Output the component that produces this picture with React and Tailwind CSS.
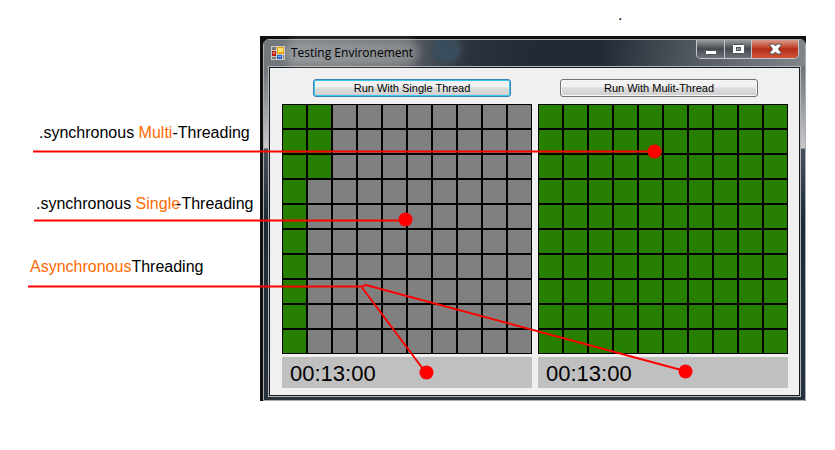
const SINGLE_DONE = new Set([0, 1, 10, 11, 20, 21, 30, 40, 50, 60, 70, 80, 90]);

function ThreadPanel({ label, focused, isDone }) {
  return (
    <section className="flex min-w-0 flex-1 flex-col">
      <div className={focused ? "flex justify-center pl-[10px]" : "flex justify-center pr-2"}>
        <button
          type="button"
          className={
            focused
              ? "h-[18px] w-[198px] rounded-[3px] border border-[#3c7fb1] bg-linear-to-b from-[#f2f2f2] from-40% via-[#dddddd] via-50% to-[#cfcfcf] text-[11px] leading-4 text-black inset-ring inset-ring-[#38c5ee]"
              : "h-[18px] w-[198px] rounded-[3px] border border-[#707070] bg-linear-to-b from-[#f2f2f2] from-40% via-[#dddddd] via-50% to-[#cfcfcf] text-[11px] leading-4 text-black inset-ring inset-ring-[#f8f8f8]"
          }
        >
          {label}
        </button>
      </div>
      <div className="mt-[7px] grid grid-cols-10">
        {Array.from({ length: 100 }, (_, i) => (
          <div
            key={i}
            className={
              isDone(i)
                ? "h-[25px] border border-black bg-[#267f00]"
                : "h-[25px] border border-black bg-[#808080]"
            }
          />
        ))}
      </div>
      <div className="mt-[3px] h-[31px] bg-[#c0c0c0] px-2 text-[22px] leading-[34px] text-black">
        00:13:00
      </div>
    </section>
  );
}

function AppIcon() {
  return (
    <svg className="size-[14px] shrink-0" viewBox="0 0 14 14" aria-hidden="true">
      <rect width="14" height="14" fill="#c9c9c9" />
      <rect x="1" y="1" width="4" height="3" fill="#777" />
      <rect x="1" y="5" width="4" height="5" fill="#b31b13" />
      <rect x="2" y="6" width="2" height="2" fill="#f08070" />
      <rect x="1" y="11" width="4" height="2" fill="#777" />
      <rect x="6" y="1" width="7" height="7" fill="#e7a500" />
      <rect x="7" y="2" width="5" height="4" fill="#ffdf70" />
      <rect x="6" y="9" width="5" height="4" fill="#2c65d6" />
      <rect x="7" y="10" width="3" height="1" fill="#8bb6ff" />
      <rect x="12" y="9" width="1" height="4" fill="#777" />
    </svg>
  );
}

function CaptionButtons() {
  return (
    <div className="flex h-[19px] overflow-hidden rounded-b-[5px] border border-t-0 border-[#c4c6c9]">
      <button type="button" aria-label="Minimize" className="flex w-7 items-center justify-center border-r border-[#c4c6c9] bg-linear-to-b from-[#9a9da1] from-0% via-[#45494f] via-50% to-[#6d747b]">
        <svg className="h-[12px] w-[13px]" viewBox="0 0 13 12">
          <rect x="1.5" y="7.5" width="11" height="4" rx="1" fill="#fff" stroke="#50555d" />
        </svg>
      </button>
      <button type="button" aria-label="Maximize" className="flex w-[27px] items-center justify-center border-r border-[#c4c6c9] bg-linear-to-b from-[#9a9da1] from-0% via-[#45494f] via-50% to-[#6d747b]">
        <svg className="h-[12px] w-[13px]" viewBox="0 0 13 12">
          <rect x="0.5" y="1.5" width="12" height="9" rx="1" fill="#fff" stroke="#50555d" />
          <rect x="4.5" y="4.5" width="4" height="3" fill="#8c9198" stroke="#50555d" />
        </svg>
      </button>
      <button type="button" aria-label="Close" className="flex w-[46px] items-center justify-center bg-linear-to-b from-[#dc9a8c] from-0% via-[#b52c14] via-50% to-[#d0543a]">
        <svg className="h-[12px] w-[13px]" viewBox="0 0 13 12">
          <path
            d="M1 1h4l1.500 2 1.500-2h4v1.500l-2.500 3.500 2.500 3.500v1.500h-4l-1.500-2-1.500 2h-4v-1.500l2.500-3.500-2.500-3.500z"
            fill="#fff"
            stroke="#574a50"
          />
        </svg>
      </button>
    </div>
  );
}

function Note({ className, children }) {
  return <p className={`whitespace-nowrap text-[16px] leading-5 text-black ${className}`}>{children}</p>;
}

export default function App() {
  return (
    <main className="relative min-h-screen bg-white font-['Liberation_Sans',Arial,sans-serif]">
      <div className="h-9 pl-[618px] text-[16px] leading-[30px] text-black">.</div>
      <div className="flex pr-[29px]">
        <aside className="w-[260px] shrink-0 pt-[87px]">
          <Note className="pl-[39px]">
            .synchronous <span className="text-[#ff6a00]">Multi</span>-Threading
          </Note>
          <Note className="mt-[51px] pl-[36px]">
            .synchronous <span className="-mr-1 text-[#ff6a00]">Single</span>-Threading
          </Note>
          <Note className="mt-[43px] pl-[30px]">
            <span className="text-[#ff6a00]">Asynchronous</span>Threading
          </Note>
        </aside>

        <div className="min-w-0 flex-1 bg-[#101010] pt-[3px] pl-[3px]">
          <div className="rounded-t-[6px] border border-[#a9adb1] bg-[#27323d]">
            <div className="rounded-t-[5px] bg-[linear-gradient(to_bottom,#6f757b_29px,#c9c9cc_108px,#46505a_109px,#1f2b33_180px,#27323d_100%)] px-1 pb-[3px]">
              <header className="-mx-1 flex h-[26px] items-start rounded-t-[5px] bg-[radial-gradient(ellipse_18px_16px_at_182px_10px,#3a4d5c_60%,transparent_100%),linear-gradient(100deg,#74797d_0%,#5f6468_25%,#2c333d_38%,#222a36_50%,#232a35_62%,#50565d_78%,#80868a_100%)] pr-[6px] pl-[7px]">
                <div className="flex h-[26px] flex-1 items-center gap-[6px]">
                  <AppIcon />
                  <h1 className="rounded-full bg-white/25 font-['Open_Sans',sans-serif] text-[12px] leading-4 text-black shadow-[0_0_8px_6px_rgba(255,255,255,0.25)]">
                    Testing Environement
                  </h1>
                </div>
                <CaptionButtons />
              </header>
              <div className="border border-[#b5b8bb]">
                <div className="flex gap-[6px] border border-[#15181c] bg-[#f0f0f0] pt-[11px] pr-[11px] pb-[7px] pl-3">
                  <ThreadPanel label="Run With Single Thread" focused isDone={(i) => SINGLE_DONE.has(i)} />
                  <ThreadPanel label="Run With Mulit-Thread" isDone={() => true} />
                </div>
              </div>
            </div>
          </div>
        </div>
      </div>

      <svg
        className="pointer-events-none absolute top-0 left-0 h-[450px] w-full"
        viewBox="0 0 835 450"
        preserveAspectRatio="none"
        aria-hidden="true"
      >
        <g fill="none" stroke="#ff0000" strokeWidth="2">
          <path d="M33 151.500H654" />
          <path d="M34 220.500H405" />
          <path d="M28 286.500H362L366 285L685 371" />
          <path d="M362 287.500L426 373" />
        </g>
        <g fill="#ff0000">
          <circle cx="654.500" cy="151.500" r="7" />
          <circle cx="405.500" cy="219.500" r="7" />
          <circle cx="426.500" cy="372.500" r="7" />
          <circle cx="685.500" cy="371.500" r="7" />
        </g>
      </svg>
    </main>
  );
}
